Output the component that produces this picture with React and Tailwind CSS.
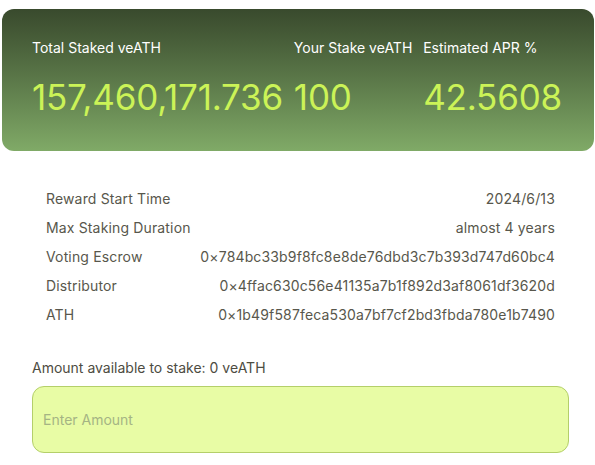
import React, { useState } from "react";

const details = [
  { label: "Reward Start Time", value: "2024/6/13" },
  { label: "Max Staking Duration", value: "almost 4 years" },
  { label: "Voting Escrow", value: "0×784bc33b9f8fc8e8de76dbd3c7b393d747d60bc4" },
  { label: "Distributor", value: "0×4ffac630c56e41135a7b1f892d3af8061df3620d" },
  { label: "ATH", value: "0×1b49f587feca530a7bf7cf2bd3fbda780e1b7490" },
];

const stats = [
  { label: "Total Staked veATH", value: "157,460,171.736" },
  { label: "Your Stake veATH", value: "100" },
  { label: "Estimated APR %", value: "42.5608" },
];

function App() {
  const [amount, setAmount] = useState("");

  return (
    <div className="min-h-screen bg-white pt-[9px] font-['Inter','Liberation_Sans',sans-serif]">
      {/* Stats card */}
      <div className="ml-[2px] mr-[1px] rounded-xl bg-gradient-to-b from-[#394a2d] to-[#80aa67] pl-[30px] pr-[32px] pt-[29px] pb-[36px]">
        <div className="flex justify-between">
          {stats.map((s) => (
            <div key={s.label} className="flex flex-col">
              <span className="whitespace-nowrap text-sm leading-5 text-white">{s.label}</span>
              <span className="mt-[21px] whitespace-nowrap text-[35px] leading-9 font-normal tracking-[-0.2px] text-[#cbf357]">
                {s.value}
              </span>
            </div>
          ))}
        </div>
      </div>

      {/* Details */}
      <div className="pl-8 pr-[26px] pt-[38px]">
        <div className="mx-[14px] flex flex-col gap-[9px]">
          {details.map((d) => (
            <div key={d.label} className="flex justify-between text-sm leading-5 tracking-[0.15px] text-[#58574c]">
              <span>{d.label}</span>
              <span>{d.value}</span>
            </div>
          ))}
        </div>

        <p className="mt-[33px] text-sm leading-5 text-[#4d4c42]">
          Amount available to stake: 0 veATH
        </p>

        <input
          type="text"
          value={amount}
          onChange={(e) => setAmount(e.target.value)}
          placeholder="Enter Amount"
          className="mt-[8px] block h-[67px] w-full rounded-xl border border-[#b4cf6a] bg-[#e8fca5] px-[10px] text-sm text-[#4d4c42] placeholder:text-[#a5b484] focus:outline-none"
        />
      </div>
    </div>
  );
}

export default App;
